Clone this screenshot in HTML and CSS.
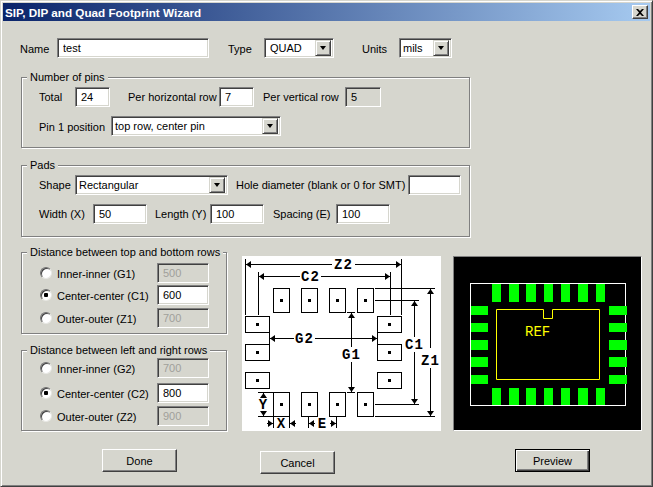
FILE: index.html
```html
<!DOCTYPE html>
<html lang="en">
<head>
    <meta charset="UTF-8">
    <meta name="viewport" content="width=device-width, initial-scale=1.0">
    <title>SIP, DIP and Quad Footprint Wizard</title>
    <link rel="stylesheet" href="styles.css">
</head>
<body>
    <div class="window">
        <div class="titlebar">
            <span class="title">SIP, DIP and Quad Footprint Wizard</span>
            <button class="close" aria-label="Close">
                <svg width="8" height="7" viewBox="0 0 8 7"><path d="M0 0h2l2 2 2-2h2L5 3.500 8 7H6L4 5 2 7H0l3-3.500z"/></svg>
            </button>
        </div>

        <div class="content">
            <div class="row">
                <label class="l-name">Name</label>
                <input class="field f-name" type="text" value="test">
                <label class="l-type">Type</label>
                <div class="combo c-type"><span>QUAD</span><i class="arrow"></i></div>
                <label class="l-units">Units</label>
                <div class="combo c-units"><span>mils</span><i class="arrow"></i></div>
            </div>

            <fieldset class="group pins">
                <legend>Number of pins</legend>
                <div class="row">
                    <label class="l-total">Total</label>
                    <input class="field f-pin" type="text" value="24">
                    <label class="l-hrow">Per horizontal row</label>
                    <input class="field f-pin" type="text" value="7">
                    <label class="l-vrow">Per vertical row</label>
                    <input class="field f-vrow" type="text" value="5" readonly>
                </div>
                <div class="row row-next">
                    <label class="l-pin1">Pin 1 position</label>
                    <div class="combo c-pin1"><span>top row, center pin</span><i class="arrow"></i></div>
                </div>
            </fieldset>

            <fieldset class="group pads">
                <legend>Pads</legend>
                <div class="row">
                    <label class="l-total">Shape</label>
                    <div class="combo c-shape"><span>Rectangular</span><i class="arrow"></i></div>
                    <label class="l-hole">Hole diameter (blank or 0 for SMT)</label>
                    <input class="field f-hole" type="text">
                </div>
                <div class="row row-next">
                    <label class="l-width">Width (X)</label>
                    <input class="field f-size" type="text" value="50">
                    <label class="l-length">Length (Y)</label>
                    <input class="field f-size" type="text" value="100">
                    <label class="l-spacing">Spacing (E)</label>
                    <input class="field f-size" type="text" value="100">
                </div>
            </fieldset>

            <div class="lower">
                <div class="distances">
                    <fieldset class="group dist dist-rows">
                        <legend>Distance between top and bottom rows</legend>
                        <div class="row"><input type="radio" name="d1"><label class="l-radio">Inner-inner (G1)</label><input class="field f-dist" type="text" value="500" disabled></div>
                        <div class="row gap-2"><input type="radio" name="d1" checked><label class="l-radio">Center-center (C1)</label><input class="field f-dist" type="text" value="600"></div>
                        <div class="row gap-3"><input type="radio" name="d1"><label class="l-radio">Outer-outer (Z1)</label><input class="field f-dist" type="text" value="700" disabled></div>
                    </fieldset>
                    <fieldset class="group dist dist-cols">
                        <legend>Distance between left and right rows</legend>
                        <div class="row"><input type="radio" name="d2"><label class="l-radio">Inner-inner (G2)</label><input class="field f-dist" type="text" value="700" disabled></div>
                        <div class="row gap-5"><input type="radio" name="d2" checked><label class="l-radio">Center-center (C2)</label><input class="field f-dist" type="text" value="800"></div>
                        <div class="row gap-3"><input type="radio" name="d2"><label class="l-radio">Outer-outer (Z2)</label><input class="field f-dist" type="text" value="900" disabled></div>
                    </fieldset>
                </div>

                <!-- dimension drawing -->
                <svg class="diagram" width="199" height="175" viewBox="0 0 199 175">
                    <defs>
                        <g id="pad-v"><rect x=".5" y=".5" width="16" height="24" fill="#fff" stroke="#000"/><rect x="7" y="11" width="3" height="3"/></g>
                        <g id="pad-h"><rect x=".5" y=".5" width="24" height="16" fill="#fff" stroke="#000"/><rect x="11" y="7" width="3" height="3"/></g>
                    </defs>
                    <use href="#pad-v" x="31" y="32"/><use href="#pad-v" x="59" y="32"/><use href="#pad-v" x="87" y="32"/><use href="#pad-v" x="115" y="32"/>
                    <use href="#pad-v" x="31" y="136"/><use href="#pad-v" x="59" y="136"/><use href="#pad-v" x="87" y="136"/><use href="#pad-v" x="115" y="136"/>
                    <use href="#pad-h" x="3" y="60"/><use href="#pad-h" x="3" y="88"/><use href="#pad-h" x="3" y="116"/>
                    <use href="#pad-h" x="135" y="60"/><use href="#pad-h" x="135" y="88"/><use href="#pad-h" x="135" y="116"/>
                    <path class="dim" d="M3.500 3V59M159.500 3V59M3.500 8.500H90M113 8.500H159
                        M16.500 16V59M148.500 16V59M16.500 20.500H58M79 20.500H148
                        M27.500 76V88M135.500 76V88M28 82.500H52M73 82.500H135
                        M105 56.500H113M105 136.500H113M109.500 56V91M109.500 106V136
                        M133 44.500H177M133 148.500H177M172.500 44V81M172.500 96V148
                        M133 32.500H193M133 160.500H193M188.500 32V92M188.500 112V160
                        M16 136.500H31M16 160.500H31M21.500 137V141M21.500 155V160
                        M31.500 160V172M47.500 160V172M25 167.500H31M48 167.500H54
                        M66.500 160V172M94.500 160V172M67 167.500H73M88 167.500H94"/>
                    <path d="M4 8.500l5-3.500v7zM159 8.500l-5-3.500v7zM17 20.500l5-3.500v7zM148 20.500l-5-3.500v7z
                        M28 82.500l5-3.500v7zM135 82.500l-5-3.500v7z
                        M109.500 57l-3.500 5h7zM109.500 136l-3.500-5h7zM172.500 45l-3.500 5h7zM172.500 148l-3.500-5h7z
                        M188.500 33l-3.500 5h7zM188.500 160l-3.500-5h7zM21.500 137l-3.500 5h7zM21.500 160l-3.500-5h7z
                        M31 167.500l-5-3.500v7zM48 167.500l5-3.500v7zM67 167.500l5-3.500v7zM94 167.500l-5-3.500v7z"/>
                    <text class="dim-text" x="101.500" y="13">Z2</text>
                    <text class="dim-text" x="68.500" y="25">C2</text>
                    <text class="dim-text" x="62.500" y="87">G2</text>
                    <text class="dim-text" x="109.500" y="103">G1</text>
                    <text class="dim-text" x="172.500" y="93">C1</text>
                    <text class="dim-text" x="188.500" y="109">Z1</text>
                    <text class="dim-text" x="21.500" y="153">Y</text>
                    <text class="dim-text" x="39.500" y="172">X</text>
                    <text class="dim-text" x="80.500" y="172">E</text>
                </svg>

                <!-- footprint preview -->
                <div class="preview">
                    <svg width="187" height="173" viewBox="0 0 187 173">
                        <rect class="outline" x="16.500" y="26.500" width="155" height="122"/>
                        <g fill="#00ff00">
                            <rect x="38" y="27" width="9" height="18"/><rect x="55" y="27" width="10" height="18"/><rect x="72" y="27" width="10" height="18"/><rect x="90" y="27" width="9" height="18"/><rect x="107" y="27" width="9" height="18"/><rect x="124" y="27" width="10" height="18"/><rect x="142" y="27" width="9" height="18"/>
                            <rect x="38" y="131" width="9" height="17"/><rect x="55" y="131" width="10" height="17"/><rect x="72" y="131" width="10" height="17"/><rect x="90" y="131" width="9" height="17"/><rect x="107" y="131" width="9" height="17"/><rect x="124" y="131" width="10" height="17"/><rect x="142" y="131" width="9" height="17"/>
                            <rect x="17" y="49" width="17" height="9"/><rect x="17" y="66" width="17" height="9"/><rect x="17" y="83" width="17" height="10"/><rect x="17" y="100" width="17" height="10"/><rect x="17" y="118" width="17" height="9"/>
                            <rect x="155" y="49" width="18" height="9"/><rect x="155" y="66" width="18" height="9"/><rect x="155" y="83" width="18" height="10"/><rect x="155" y="100" width="18" height="10"/><rect x="155" y="118" width="18" height="9"/>
                        </g>
                        <path class="body" d="M42.500 52.500H89.500V61.500H98.500V52.500H145.500V122.500H42.500Z"/>
                        <text class="ref" x="71" y="79">REF</text>
                    </svg>
                </div>
            </div>

            <div class="footer">
                <button class="btn b-done">Done</button>
                <button class="btn b-cancel">Cancel</button>
                <button class="btn b-preview">Preview</button>
            </div>
        </div>
    </div>
</body>
</html>
```

FILE: styles.css
```css
* { box-sizing: border-box; }
html, body { margin: 0; padding: 0; }
body { font-family: "Liberation Sans", Arial, sans-serif; font-size: 11px; color: #000; background: #d6d6ce; }

.window { width: 653px; height: 487px; padding: 2px; overflow: hidden; background: #d6d6ce; border: 1px solid; border-color: #d6d6ce #404040 #404040 #d6d6ce; box-shadow: inset 1px 1px 0 #fff, inset -1px -1px 0 #808080; }

.titlebar { display: flex; align-items: center; justify-content: space-between; height: 18px; padding: 0 2px; background: linear-gradient(to right, #0a246a, #a6caf0); }
.title { color: #fff; font-weight: bold; font-size: 11.700px; }
.close { display: flex; align-items: center; justify-content: center; width: 16px; height: 14px; padding: 0; background: #d6d6ce; border: 1px solid; border-color: #fff #404040 #404040 #fff; box-shadow: inset -1px -1px 0 #808080; }

.content { padding: 17px 0 0 17px; }
.row { display: flex; align-items: center; height: 20px; }
.row-next { margin-top: 9px; }
.gap-2 { margin-top: 2px; }
.gap-3 { margin-top: 3px; }
.gap-5 { margin-top: 5px; }

label { display: block; white-space: nowrap; padding-top: 2px; }
.pins .row:first-of-type label, .pads label { padding-top: 0; }
.l-name { width: 37px; }
.l-type { width: 36px; margin-left: 19px; }
.l-units { width: 37px; margin-left: 28px; }
.l-total { width: 36px; }
.l-hrow { width: 91px; margin-left: 18px; }
.l-vrow { width: 82px; margin-left: 9px; }
.l-pin1 { width: 72px; }
.l-hole { width: 172px; margin-left: 8px; }
.l-width { width: 54px; }
.l-length { width: 55px; margin-left: 8px; }
.l-spacing { width: 63px; margin-left: 9px; }
.l-radio { width: 100px; margin-left: 5px; }

.field { height: 20px; padding: 0 0 0 5px; margin: 0; font: inherit; color: #000; background: #fff; outline: none; border: 1px solid; border-radius: 0; border-color: #808080 #fff #fff #808080; box-shadow: inset 1px 1px 0 #404040, inset -1px -1px 0 #d6d6ce; }
.field[readonly] { background: #d6d6ce; }
.field:disabled { background: #d6d6ce; color: #a0a09a; }
.f-name { width: 152px; }
.f-pin { width: 35px; }
.f-vrow { width: 36px; }
.f-hole { width: 53px; }
.f-size { width: 54px; }
.f-dist { width: 52px; }

.combo { display: flex; align-items: center; justify-content: space-between; height: 20px; padding: 2px 2px 2px 3px; background: #fff; border: 1px solid; border-color: #808080 #fff #fff #808080; box-shadow: inset 1px 1px 0 #404040, inset -1px -1px 0 #d6d6ce; }
.arrow { display: flex; align-items: center; justify-content: center; width: 16px; height: 16px; background: #d6d6ce; border: 1px solid; border-color: #d6d6ce #404040 #404040 #d6d6ce; box-shadow: inset 1px 1px 0 #fff, inset -1px -1px 0 #808080; }
.arrow::after { content: ""; border-style: solid; border-width: 4px 3.5px 0; border-color: #000 transparent transparent; }
.c-type { width: 70px; padding-left: 5px; }
.c-units { width: 53px; }
.c-pin1 { width: 170px; }
.c-shape { width: 153px; }

.group { margin: 0; padding: 0; min-width: 0; border: 1px solid #808080; box-shadow: inset 1px 1px 0 #fff, 1px 1px 0 #fff; }
.group legend { margin-left: -12px; padding: 1px 3px 0; line-height: 13px; white-space: nowrap; background: #d6d6ce; }
.pins, .pads { width: 449px; margin-left: 1px; padding: 3px 0 0 17px; }
.pins { margin-top: 12px; padding-bottom: 11px; }
.pads { margin-top: 10px; padding-bottom: 12px; }

.lower { display: flex; align-items: flex-start; margin: 8px 0 0 1px; }
.distances { width: 206px; }
.dist { width: 206px; padding-left: 18px; }
.dist legend { margin-left: -13px; }
.dist-rows { padding-top: 4px; padding-bottom: 5px; }
.dist-cols { margin-top: 9px; padding-top: 1px; padding-bottom: 4px; }

input[type="radio"] { appearance: none; width: 12px; height: 12px; margin: 0; border-radius: 50%; background: #fff; border: 1px solid; border-color: #707070 #e8e8e4 #e8e8e4 #707070; box-shadow: inset 1px 1px 0 #404040; }
input[type="radio"]:checked { background: radial-gradient(circle, #000 2px, #fff 2.5px); }

.diagram { display: block; flex: none; margin: 11px 0 0 15px; background: #fff; }
.dim { fill: none; stroke: #000; }
.dim-text { font-family: "Liberation Mono", monospace; font-size: 14px; font-weight: bold; letter-spacing: 1px; text-anchor: middle; }

.preview { flex: none; width: 189px; height: 175px; margin: 11px 0 0 12px; background: #000; border: 1px solid; border-color: #808080 #fff #fff #808080; }
.preview svg { display: block; }
.outline { fill: none; stroke: #fff; }
.body { fill: none; stroke: #ffff00; }
.ref { fill: #ffff00; font-family: "Liberation Mono", monospace; font-size: 14px; }

.footer { display: flex; align-items: flex-start; margin-top: 18px; }
.btn { width: 75px; height: 23px; padding: 0; font: inherit; color: #000; background: #d6d6ce; border: 1px solid; border-color: #fff #404040 #404040 #fff; box-shadow: inset -1px -1px 0 #808080; }
.b-done { margin-left: 82px; }
.b-cancel { margin-left: 83px; margin-top: 2px; }
.b-preview { margin-left: 180px; border-color: #000; box-shadow: inset 1px 1px 0 #fff, inset -1px -1px 0 #404040, inset -2px -2px 0 #808080; }
```
